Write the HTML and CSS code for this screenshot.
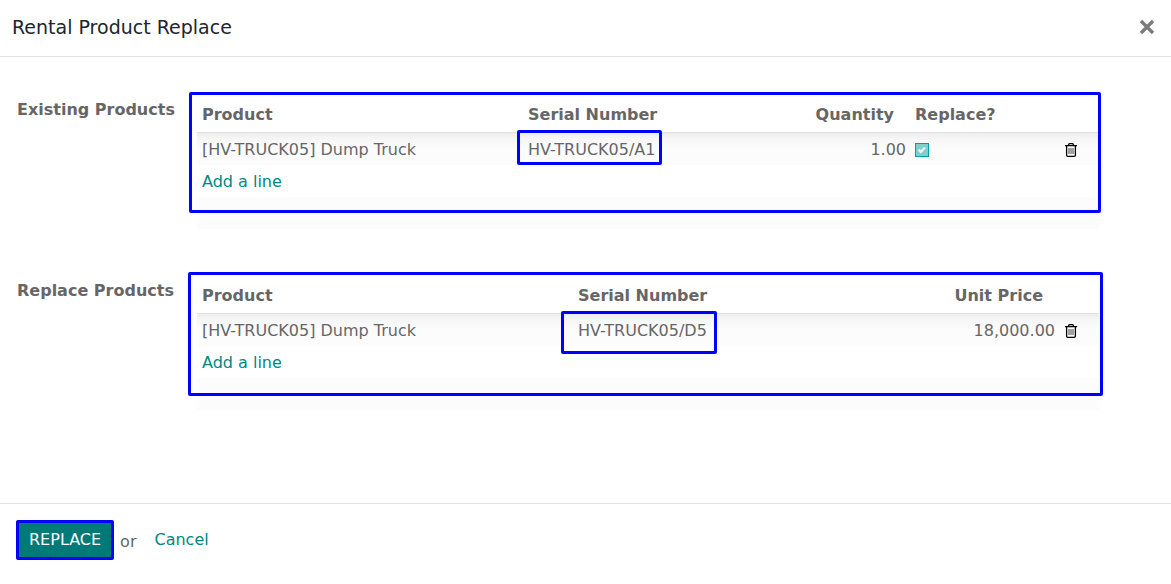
FILE: index.html
```html
<!DOCTYPE html>
<html lang="en">
<head>
<meta charset="utf-8">
<title>Rental Product Replace</title>
<link rel="stylesheet" href="styles.css">
</head>
<body>
<div class="dialog">
  <header class="dialog-header">
    <h1 class="dialog-title">Rental Product Replace</h1>
    <button class="close" type="button" aria-label="Close">
      <svg viewBox="0 0 16 16" width="16" height="16"><path d="M2 2 14 14M14 2 2 14" fill="none" stroke="#7b7b7b" stroke-width="3.4"/></svg>
    </button>
  </header>

  <main class="dialog-body">
    <section class="group">
      <h2 class="group-label" id="existing">Existing Products</h2>
      <div class="group-content">
        <table class="lines" aria-labelledby="existing">
          <colgroup><col><col class="col-serial"><col class="col-quantity"><col class="col-replace"><col class="col-trash"></colgroup>
          <thead>
            <tr><th>Product</th><th>Serial Number</th><th class="number">Quantity</th><th>Replace?</th><th></th></tr>
          </thead>
          <tbody>
            <tr class="first">
              <td>[HV-TRUCK05] Dump Truck</td>
              <td><span class="serial">HV-TRUCK05/A1<i class="mark mark-serial"></i></span></td>
              <td class="number">1.00</td>
              <td>
                <span class="check">
                  <input class="check-input" type="checkbox" checked disabled aria-label="Replace?">
                  <svg class="check-tick" viewBox="0 0 14 14" width="14" height="14"><path d="M3.6 6.8 5.8 8.9 10 4.4" fill="none" stroke="#edf7f7" stroke-width="2.2"/></svg>
                </span>
              </td>
              <td>
                <button class="trash" type="button" aria-label="Delete row">
                  <svg viewBox="0 0 12 14" width="12" height="14" fill="none" stroke="#000"><path d="M0 2.7H12M3.6 2.6V1.7Q3.6 .7 4.6 .7H7.4Q8.4 .7 8.4 1.7V2.6" stroke-width="1.3"/><path d="M1.6 2.7V12.1Q1.6 13.3 2.8 13.3H9.2Q10.4 13.3 10.4 12.1V2.7" stroke-width="1.3"/><path d="M4 5V11M6 5V11M8 5V11" stroke="#444" stroke-width="1"/></svg>
                </button>
              </td>
            </tr>
            <tr><td colspan="5"><a class="link" href="#">Add a line</a></td></tr>
            <tr class="blank"><td colspan="5"></td></tr>
          </tbody>
        </table>
        <i class="mark mark-existing"></i>
      </div>
    </section>

    <section class="group">
      <h2 class="group-label" id="replacement">Replace Products</h2>
      <div class="group-content">
        <table class="lines" aria-labelledby="replacement">
          <colgroup><col><col class="col-serial-wide"><col class="col-price"><col class="col-trash"></colgroup>
          <thead>
            <tr><th>Product</th><th>Serial Number</th><th class="number">Unit Price</th><th></th></tr>
          </thead>
          <tbody>
            <tr class="first">
              <td>[HV-TRUCK05] Dump Truck</td>
              <td><span class="serial">HV-TRUCK05/D5<i class="mark mark-serial-wide"></i></span></td>
              <td class="number">18,000.00</td>
              <td>
                <button class="trash" type="button" aria-label="Delete row">
                  <svg viewBox="0 0 12 14" width="12" height="14" fill="none" stroke="#000"><path d="M0 2.7H12M3.6 2.6V1.7Q3.6 .7 4.6 .7H7.4Q8.4 .7 8.4 1.7V2.6" stroke-width="1.3"/><path d="M1.6 2.7V12.1Q1.6 13.3 2.8 13.3H9.2Q10.4 13.3 10.4 12.1V2.7" stroke-width="1.3"/><path d="M4 5V11M6 5V11M8 5V11" stroke="#444" stroke-width="1"/></svg>
                </button>
              </td>
            </tr>
            <tr><td colspan="4"><a class="link" href="#">Add a line</a></td></tr>
            <tr class="blank"><td colspan="4"></td></tr>
          </tbody>
        </table>
        <i class="mark mark-replacement"></i>
      </div>
    </section>
  </main>

  <footer class="dialog-footer">
    <button class="primary" type="button">REPLACE</button>
    <span class="or">or</span>
    <a class="link cancel" href="#">Cancel</a>
  </footer>
</div>
</body>
</html>
```

FILE: styles.css
```css
* { box-sizing: border-box; }

body {
  margin: 0;
  background: #fff;
  color: #666;
  font: 16px/24px "DejaVu Sans", sans-serif;
}

button { font: inherit; cursor: pointer; }

.dialog {
  display: flex;
  flex-direction: column;
  min-height: 100vh;
}

.dialog-header {
  display: flex;
  align-items: center;
  justify-content: space-between;
  padding: 12px 16px 14px 12px;
  border-bottom: 1px solid #dee2e6;
}

.dialog-title {
  margin: 0;
  color: #212529;
  font-size: 19px;
  font-weight: 400;
  line-height: 30px;
}

.close,
.trash {
  display: flex;
  padding: 0;
  border: 0;
  background: none;
}

.dialog-body {
  display: flex;
  flex: 1;
  flex-direction: column;
  gap: 50px;
  padding: 41px 72px 40px 17px;
}

.group {
  display: grid;
  grid-template-columns: 180px 1fr;
}

.group-label {
  margin: 0;
  font-size: 16px;
  line-height: 24px;
}

.group-content { position: relative; }

.lines {
  width: 100%;
  table-layout: fixed;
  border-collapse: separate;
  border-spacing: 0;
}

.col-serial { width: 250px; }
.col-quantity { width: 137px; }
.col-replace { width: 149px; }
.col-serial-wide { width: 376px; }
.col-price { width: 110px; }
.col-trash { width: 40px; }

.lines th {
  height: 35px;
  padding: 0 5px;
  border-bottom: 1px solid #dee2e6;
  text-align: left;
  white-space: nowrap;
}

.lines td {
  height: 32px;
  padding: 2px 5px 0;
  white-space: nowrap;
}

.lines .number { text-align: right; }
.lines th.number { padding-right: 16px; }
.lines td.number { padding-right: 4px; }

.first { background: linear-gradient(#ededed, #f6f6f6 6px, #fcfcfc 16px); }
.blank { background: #fcfcfc; }

.link { color: #008784; text-decoration: none; }

.serial { position: relative; }

.mark {
  position: absolute;
  border: 3px solid #00f;
  border-radius: 2px;
  pointer-events: none;
}

.mark-existing { inset: -6px -2px 16px -8px; }
.mark-replacement { inset: -7px -4px 14px -9px; }
.mark-serial { inset: -10px -7px -6px -11px; }
.mark-serial-wide { inset: -10px -10px -14px -17px; }

.check {
  position: relative;
  display: flex;
  width: 14px;
}

.check-input {
  appearance: none;
  width: 14px;
  height: 14px;
  margin: 0;
  border: 1px solid #00a09d;
  background: #7fcfce;
}

.check-tick {
  position: absolute;
  inset: 0;
  pointer-events: none;
}

.trash { margin-left: 1px; }

.dialog-footer {
  display: flex;
  align-items: center;
  padding: 16px 16px 24px;
  border-top: 1px solid #dee2e6;
}

.primary {
  padding: 5px 10px;
  border: 3px solid #00f;
  border-radius: 2px;
  background: #007a77;
  color: #fff;
}

.or { margin: 3px 18px 0 6px; }
```
